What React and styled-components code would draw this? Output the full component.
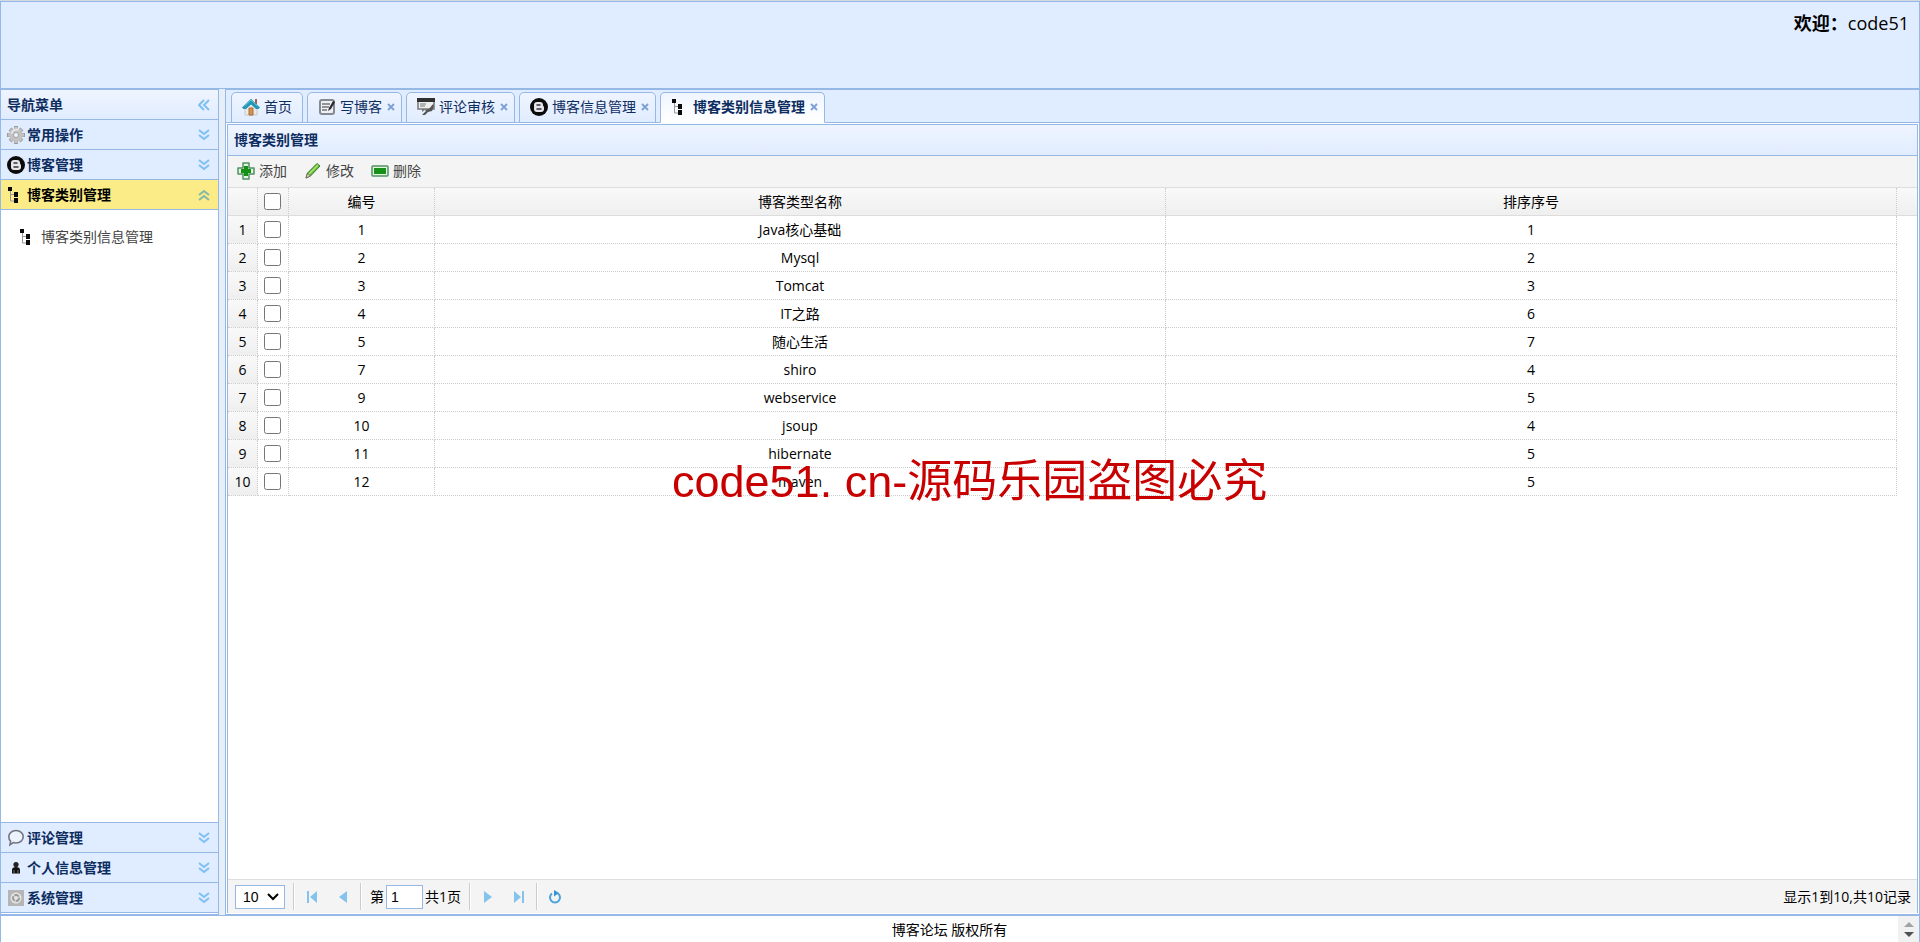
import React, { useState } from 'react';
import styled, { createGlobalStyle, css } from 'styled-components';

const BORDER = '#95b8e7';
const PALE = '#e0ecff';
const NAVY = '#0e2d5f';
const LINE = '#dddddd';

const GlobalStyle = createGlobalStyle`
  * {
    box-sizing: border-box;
  }

  body {
    margin: 0;
    font-family: "Open Sans", "Noto Sans CJK SC", sans-serif;
    font-size: 14px;
    line-height: 20px;
    color: #000;
    background: #fff;
  }

  button,
  input,
  select {
    font: inherit;
    color: inherit;
  }

  svg {
    display: block;
    flex: none;
  }
`;

const plainButton = css`
  display: flex;
  align-items: center;
  margin: 0;
  padding: 0;
  border: 0;
  background: none;
  cursor: pointer;
`;

const Page = styled.div`
  display: flex;
  flex-direction: column;
  height: 100vh;
  overflow: hidden;
  border-top: 1px solid #d4dae2;
`;

const Header = styled.header`
  flex: none;
  height: 88px;
  padding: 9px 10px;
  border: 1px solid ${BORDER};
  background: ${PALE};
  text-align: right;
  font-size: 18px;
  line-height: 24px;
`;

const Main = styled.div`
  flex: 1;
  display: flex;
  gap: 6px;
  min-height: 0;
  background: #e6eef8;
`;

const Sidebar = styled.nav`
  display: flex;
  flex-direction: column;
  flex: none;
  width: 219px;
  padding-bottom: 1px;
  border: 1px solid ${BORDER};
  background: #fff;
`;

const SidebarTitle = styled.div`
  display: flex;
  align-items: center;
  justify-content: space-between;
  height: 30px;
  padding: 0 8px 0 6px;
  border-bottom: 1px solid ${BORDER};
  background: linear-gradient(to bottom, #eff5ff, ${PALE});
  color: ${NAVY};
  font-weight: bold;
`;

const SectionButton = styled.button`
  ${plainButton}
  flex: none;
  gap: 2px;
  width: 100%;
  height: 30px;
  padding: 0 8px 0 6px;
  border-bottom: 1px solid ${BORDER};
  background: ${({ $open }) => ($open ? '#fbec88' : PALE)};
  color: ${({ $open }) => ($open ? '#000' : NAVY)};
  font-weight: bold;
`;

const SectionName = styled.span`
  flex: 1;
  text-align: left;
`;

const SectionBody = styled.div`
  flex: 1;
  padding: 17px 18px;
  border-bottom: 1px solid ${BORDER};
`;

const MenuLink = styled.a`
  display: flex;
  align-items: center;
  gap: 4px;
  color: #444;
  text-decoration: none;
`;

const Center = styled.main`
  display: flex;
  flex-direction: column;
  flex: 1;
  min-width: 0;
  border: 1px solid ${BORDER};
  background: #fff;
`;

const TabStrip = styled.div`
  display: flex;
  flex: none;
  gap: 4px;
  padding: 2px 5px 0;
  border-bottom: 1px solid ${BORDER};
  background: ${PALE};
`;

const Tab = styled.div`
  display: flex;
  align-items: center;
  gap: 5px;
  height: 31px;
  margin-bottom: -1px;
  padding: 0 ${({ $fixed }) => ($fixed ? 10 : 6)}px 2px 10px;
  border: 1px solid ${BORDER};
  border-bottom-color: ${({ $active }) => ($active ? '#fff' : BORDER)};
  border-radius: 5px 5px 0 0;
  background: linear-gradient(
    to bottom,
    #eff5ff,
    ${({ $active }) => ($active ? '#fff' : PALE)}
  );
  color: ${NAVY};
  font-weight: ${({ $active }) => ($active ? 'bold' : 'normal')};
`;

const TabLabel = styled.button`
  ${plainButton}
  gap: 4px;
`;

const IconButton = styled.button`
  ${plainButton}
`;

const Panel = styled.section`
  display: flex;
  flex-direction: column;
  flex: 1;
  min-height: 0;
  margin: 1px;
  border: 1px solid ${BORDER};
  border-bottom: 0;
`;

const PanelTitle = styled.h1`
  flex: none;
  margin: 0;
  padding: 5px 6px;
  border-bottom: 1px solid ${BORDER};
  background: linear-gradient(to bottom, #eff5ff, ${PALE});
  color: ${NAVY};
  font-size: 14px;
  line-height: 20px;
`;

const Toolbar = styled.div`
  display: flex;
  align-items: center;
  flex: none;
  gap: 17px;
  height: 32px;
  padding: 0 9px 2px;
  border-bottom: 1px solid ${LINE};
  background: #f4f4f4;
`;

const ToolButton = styled.button`
  ${plainButton}
  gap: 4px;
  color: #444;
`;

const GridBody = styled.div`
  flex: 1;
  min-height: 0;
  overflow: hidden;
`;

const Grid = styled.table`
  width: 100%;
  table-layout: fixed;
  border-collapse: separate;
  border-spacing: 0;
  text-align: center;
`;

const HeadCell = styled.th`
  height: 28px;
  padding: 0;
  border-right: ${({ $last }) => ($last ? '0' : '1px dotted #ccc')};
  border-bottom: 1px solid ${LINE};
  background: linear-gradient(to bottom, #f9f9f9, #efefef);
  font-weight: normal;
`;

const Cell = styled.td`
  height: 28px;
  padding: 0;
  border-right: 1px dotted #ccc;
  border-bottom: 1px dotted #ccc;
`;

const NumberCell = styled(Cell)`
  background: linear-gradient(to bottom, #f9f9f9, #efefef);
`;

const Check = styled.input`
  display: block;
  width: 17px;
  height: 17px;
  margin: 0 6px;
`;

const Pager = styled.div`
  display: flex;
  align-items: center;
  flex: none;
  height: 34px;
  padding: 0 6px 0 7px;
  border-top: 1px solid ${LINE};
  background: #f4f4f4;
`;

const SizeBox = styled.div`
  position: relative;

  svg {
    position: absolute;
    top: 8px;
    right: 6px;
    pointer-events: none;
  }
`;

const SizeSelect = styled.select`
  display: block;
  appearance: none;
  width: 50px;
  height: 24px;
  padding: 0 7px;
  border: 1px solid ${BORDER};
  border-radius: 0;
  background: #fff;
  font-family: "Liberation Sans", sans-serif;
`;

const Separator = styled.span`
  width: 2px;
  height: 27px;
  margin: 0 8px;
  border-left: 1px solid #ccc;
  border-right: 1px solid #fff;
`;

const PageButton = styled.button`
  ${plainButton}
  justify-content: center;
  width: 18px;
  height: 24px;
`;

const ButtonPair = styled.div`
  display: flex;
  gap: 13px;
`;

const PageLabel = styled.label`
  display: flex;
  align-items: center;
  gap: 2px;
`;

const PageInput = styled.input`
  width: 37px;
  height: 24px;
  padding: 0 4px;
  border: 1px solid ${BORDER};
  font-family: "Liberation Sans", sans-serif;
`;

const PagerInfo = styled.span`
  margin-left: auto;
`;

const Footer = styled.footer`
  display: flex;
  flex: none;
  height: 27px;
  border: 1px solid ${BORDER};
  border-bottom: 0;
  background: #fff;
`;

const Copyright = styled.p`
  flex: 1;
  margin: 0;
  padding-top: 4px;
  text-align: center;
`;

const Scroller = styled.div`
  display: flex;
  flex-direction: column;
  align-items: center;
  justify-content: center;
  gap: 5px;
  width: 21px;
  background: #f1f1f1;
`;

const Watermark = styled.div`
  position: fixed;
  top: 48%;
  left: 35%;
  color: #c80000;
  font-family: "Liberation Sans", "Noto Sans CJK SC", sans-serif;
  font-size: 45px;
  line-height: 60px;
  white-space: nowrap;
  pointer-events: none;
`;

function Icon({ children, size = 18 }) {
  return (
    <svg width={size} height={size} viewBox={`0 0 ${size} ${size}`} aria-hidden="true">
      {children}
    </svg>
  );
}

const GearIcon = () => (
  <Icon>
    <path d="M9 0v18M0 9h18M3 3l12 12M15 3L3 15" stroke="#9d9d9d" strokeWidth="4" />
    <path d="M9 1v16M1 9h16M3.500 3.500l11 11M14.500 3.500l-11 11" stroke="#c2c2c2" strokeWidth="3" />
    <circle cx="9" cy="9" r="6.500" fill="#c2c2c2" />
    <path d="M4.500 8a5 5 0 0 1 7-4" fill="none" stroke="#e4e4e4" strokeWidth="2" />
    <circle cx="9" cy="9" r="2.500" fill="#eef4ff" stroke="#a2a2a2" />
  </Icon>
);

const BlogIcon = () => (
  <Icon>
    <circle cx="9" cy="9" r="9" fill="#0b0b0b" />
    <rect x="4" y="4" width="9" height="7" rx="3" fill="#e6e6ec" />
    <rect x="4" y="7" width="10" height="7" rx="3" fill="#e6e6ec" />
    <path d="M7 7h3M7 11h4" stroke="#33333a" strokeWidth="1.500" strokeLinecap="round" />
  </Icon>
);

const TreeIcon = () => (
  <Icon>
    <path d="M3.500 4v11H8M3.500 8.500H8" fill="none" stroke="#999" />
    <path d="M1 1h4v4H1zM7 6h4v5H7zM7 12h4v5H7z" fill="#0a0a0a" />
  </Icon>
);

const CommentIcon = () => (
  <Icon>
    <path
      d="M9 1.500c4.300 0 7.200 2.800 7.200 6.200S13.300 14 9 14c-1 0-2-.1-2.800-.4L3 15.800l.6-3.700C2.300 11 1.800 9.300 1.800 7.700 1.800 4.300 4.700 1.500 9 1.500z"
      fill="#edf3fd"
      stroke="#707580"
      strokeWidth="1.600"
    />
  </Icon>
);

const UserIcon = () => (
  <Icon>
    <circle cx="9" cy="5.500" r="2.600" fill="#222" />
    <path d="M5 14.500V11c0-2 1.500-3 4-3s4 1 4 3v3.500z" fill="#111" />
    <path d="M7 11v4M11 11v4" stroke="#777" />
  </Icon>
);

const SystemIcon = () => (
  <Icon>
    <rect x="1" y="1" width="16" height="16" fill="#b5b5b5" />
    <circle cx="9" cy="9" r="5.500" fill="#e4e4e4" />
    <circle cx="9" cy="9" r="3" fill="none" stroke="#999" strokeWidth="2" strokeDasharray="5 1" />
  </Icon>
);

const HomeIcon = () => (
  <Icon>
    <path d="M3 9l6-6 6 6v8H3z" fill="#eceae8" stroke="#c8c8c8" />
    <path d="M13 1h2v5h-2z" fill="#a85e48" />
    <path d="M0 9.500L9 .8l9 8.700-1.500 1.500H14L9 6.500 4 11H1.500z" fill="#2496b8" />
    <path d="M2.500 8L9 2l6.500 6" fill="none" stroke="#66c5dc" />
    <path d="M7 10h4v7H7z" fill="#d39353" stroke="#a96a38" />
  </Icon>
);

const WriteIcon = () => (
  <Icon>
    <rect x="2" y="2" width="14" height="14" rx="2" fill="#f0f0f3" stroke="#858990" strokeWidth="2" />
    <path d="M4 6h8M4 9h7M4 12h5" stroke="#70747b" strokeWidth="1.500" />
    <path d="M17 4l-4 7-3 2 1-3 4-7z" fill="#27292d" />
  </Icon>
);

const ReviewIcon = () => (
  <Icon>
    <rect x="1" y="2" width="16" height="9" fill="#eee" stroke="#777" strokeWidth="1.500" />
    <path d="M0 0h18v4H0z" fill="#303030" />
    <path d="M3 6h6M3 8h5" stroke="#777" />
    <path d="M16 6l-4 5-4 1 1 1-4 4h3l3-3 4-1 2-5z" fill="#555" />
    <path d="M5 11v3l4-3" fill="#777" />
  </Icon>
);

const AddIcon = () => (
  <Icon>
    <path d="M6 1h6v5h5v6h-5v5H6v-5H1V6h5z" fill="#e4f4df" stroke="#4f9163" strokeWidth="1.500" strokeLinejoin="round" />
    <path d="M7 4h4v3h3v4h-3v3H7v-3H4V7h3z" fill="#149014" />
  </Icon>
);

const EditIcon = () => (
  <Icon>
    <path d="M2 16l1.500-5L13 1.500l3 2.500-9.500 10z" fill="#62b83b" stroke="#407c32" />
    <path d="M5 12l9-9" stroke="#a8eb72" strokeWidth="1.500" />
    <path d="M2 16l1.500-5 3 3z" fill="#ded0a6" stroke="#68735a" />
  </Icon>
);

const RemoveIcon = () => (
  <Icon>
    <rect x="1" y="4" width="16" height="10" rx="1" fill="#e4f4df" stroke="#4f9163" strokeWidth="1.500" />
    <path d="M3 6h12v6H3z" fill="#179017" />
  </Icon>
);

const CHEVRONS = {
  left: 'M6 1L1 6l5 5M11 1L6 6l5 5',
  down: 'M1 1l5 4 5-4M1 6l5 4 5-4',
  up: 'M1 6l5-4 5 4M1 11l5-4 5 4',
};

const Chevrons = ({ direction }) => (
  <Icon size={12}>
    <path
      d={CHEVRONS[direction]}
      fill="none"
      stroke={direction === 'up' ? '#84b9a8' : '#7fc0f2'}
      strokeWidth="2"
    />
  </Icon>
);

const CloseIcon = () => (
  <Icon size={8}>
    <path d="M1 1l6 6M7 1L1 7" stroke="#7da0d4" strokeWidth="1.800" />
  </Icon>
);

const PAGE_ICONS = {
  first: 'M1 0h2v12H1zM11 0v12L4 6z',
  previous: 'M10 0v12L2 6z',
  next: 'M2 0v12l8-6z',
  last: 'M1 0v12l7-6zM9 0h2v12H9z',
};

const PageIcon = ({ type }) => (
  <Icon size={12}>
    <path d={PAGE_ICONS[type]} fill="#83c3ed" />
  </Icon>
);

const topSections = [
  { name: '常用操作', icon: <GearIcon /> },
  { name: '博客管理', icon: <BlogIcon /> },
  { name: '博客类别管理', icon: <TreeIcon />, open: true },
];

const bottomSections = [
  { name: '评论管理', icon: <CommentIcon /> },
  { name: '个人信息管理', icon: <UserIcon /> },
  { name: '系统管理', icon: <SystemIcon /> },
];

const tabs = [
  { name: '首页', icon: <HomeIcon />, fixed: true },
  { name: '写博客', icon: <WriteIcon /> },
  { name: '评论审核', icon: <ReviewIcon /> },
  { name: '博客信息管理', icon: <BlogIcon /> },
  { name: '博客类别信息管理', icon: <TreeIcon />, active: true },
];

const rows = [
  { id: 1, name: 'Java核心基础', order: 1 },
  { id: 2, name: 'Mysql', order: 2 },
  { id: 3, name: 'Tomcat', order: 3 },
  { id: 4, name: 'IT之路', order: 6 },
  { id: 5, name: '随心生活', order: 7 },
  { id: 7, name: 'shiro', order: 4 },
  { id: 9, name: 'webservice', order: 5 },
  { id: 10, name: 'jsoup', order: 4 },
  { id: 11, name: 'hibernate', order: 5 },
  { id: 12, name: 'maven', order: 5 },
];

function Section({ name, icon, open }) {
  return (
    <SectionButton type="button" $open={open} aria-expanded={Boolean(open)}>
      {icon}
      <SectionName>{name}</SectionName>
      <Chevrons direction={open ? 'up' : 'down'} />
    </SectionButton>
  );
}

function CategoryGrid() {
  const [selected, setSelected] = useState([]);

  const toggle = id =>
    setSelected(
      selected.includes(id) ? selected.filter(x => x !== id) : [...selected, id]
    );

  const toggleAll = () =>
    setSelected(selected.length === rows.length ? [] : rows.map(({ id }) => id));

  return (
    <Grid>
      <colgroup>
        <col width="30" />
        <col width="31" />
        <col width="146" />
        <col />
        <col />
        <col width="20" />
      </colgroup>
      <thead>
        <tr>
          <HeadCell />
          <HeadCell>
            <Check
              type="checkbox"
              aria-label="全选"
              checked={selected.length === rows.length}
              onChange={toggleAll}
            />
          </HeadCell>
          <HeadCell>编号</HeadCell>
          <HeadCell>博客类型名称</HeadCell>
          <HeadCell>排序序号</HeadCell>
          <HeadCell $last />
        </tr>
      </thead>
      <tbody>
        {rows.map(({ id, name, order }, index) => (
          <tr key={id}>
            <NumberCell>{index + 1}</NumberCell>
            <Cell>
              <Check
                type="checkbox"
                aria-label={name}
                checked={selected.includes(id)}
                onChange={() => toggle(id)}
              />
            </Cell>
            <Cell>{id}</Cell>
            <Cell>{name}</Cell>
            <Cell>{order}</Cell>
          </tr>
        ))}
      </tbody>
    </Grid>
  );
}

function Pagination() {
  return (
    <Pager>
      <SizeBox>
        <SizeSelect aria-label="每页记录数" defaultValue="10">
          <option>10</option>
          <option>20</option>
          <option>50</option>
        </SizeSelect>
        <svg width="12" height="8" viewBox="0 0 12 8" aria-hidden="true">
          <path d="M1 1l5 5 5-5" fill="none" stroke="#000" strokeWidth="2" />
        </svg>
      </SizeBox>
      <Separator />
      <ButtonPair>
        <PageButton type="button" aria-label="首页">
          <PageIcon type="first" />
        </PageButton>
        <PageButton type="button" aria-label="上一页">
          <PageIcon type="previous" />
        </PageButton>
      </ButtonPair>
      <Separator />
      <PageLabel>
        第
        <PageInput type="text" defaultValue="1" />
        共1页
      </PageLabel>
      <Separator />
      <ButtonPair>
        <PageButton type="button" aria-label="下一页">
          <PageIcon type="next" />
        </PageButton>
        <PageButton type="button" aria-label="末页">
          <PageIcon type="last" />
        </PageButton>
      </ButtonPair>
      <Separator />
      <PageButton type="button" aria-label="刷新">
        <Icon size={14}>
          <path d="M4 3.500a5 5 0 1 0 6 0" fill="none" stroke="#4ba3dc" strokeWidth="2" />
          <path d="M6 0l5 3-5 3.500z" fill="#3794d2" />
        </Icon>
      </PageButton>
      <PagerInfo>显示1到10,共10记录</PagerInfo>
    </Pager>
  );
}

export default function App() {
  return (
    <>
      <GlobalStyle />
      <Page>
        <Header>
          <strong>欢迎：</strong>code51
        </Header>
        <Main>
          <Sidebar>
            <SidebarTitle>
              导航菜单
              <IconButton type="button" aria-label="收起菜单">
                <Chevrons direction="left" />
              </IconButton>
            </SidebarTitle>
            {topSections.map(section => (
              <Section key={section.name} {...section} />
            ))}
            <SectionBody>
              <MenuLink href="#category">
                <TreeIcon />
                博客类别信息管理
              </MenuLink>
            </SectionBody>
            {bottomSections.map(section => (
              <Section key={section.name} {...section} />
            ))}
          </Sidebar>
          <Center>
            <TabStrip>
              {tabs.map(({ name, icon, fixed, active }) => (
                <Tab key={name} $active={active} $fixed={fixed}>
                  <TabLabel type="button">
                    {icon}
                    {name}
                  </TabLabel>
                  {fixed ? null : (
                    <IconButton type="button" aria-label={`关闭${name}`}>
                      <CloseIcon />
                    </IconButton>
                  )}
                </Tab>
              ))}
            </TabStrip>
            <Panel>
              <PanelTitle>博客类别管理</PanelTitle>
              <Toolbar>
                <ToolButton type="button">
                  <AddIcon />
                  添加
                </ToolButton>
                <ToolButton type="button">
                  <EditIcon />
                  修改
                </ToolButton>
                <ToolButton type="button">
                  <RemoveIcon />
                  删除
                </ToolButton>
              </Toolbar>
              <GridBody>
                <CategoryGrid />
              </GridBody>
              <Pagination />
            </Panel>
          </Center>
        </Main>
        <Footer>
          <Copyright>博客论坛 版权所有</Copyright>
          <Scroller>
            <IconButton type="button" aria-label="向上">
              <svg width="10" height="5" viewBox="0 0 10 5">
                <path d="M0 5l5-5 5 5z" fill="#a3a3a3" />
              </svg>
            </IconButton>
            <IconButton type="button" aria-label="向下">
              <svg width="10" height="5" viewBox="0 0 10 5">
                <path d="M0 0l5 5 5-5z" fill="#505050" />
              </svg>
            </IconButton>
          </Scroller>
        </Footer>
      </Page>
      <Watermark>code51. cn-源码乐园盗图必究</Watermark>
    </>
  );
}
